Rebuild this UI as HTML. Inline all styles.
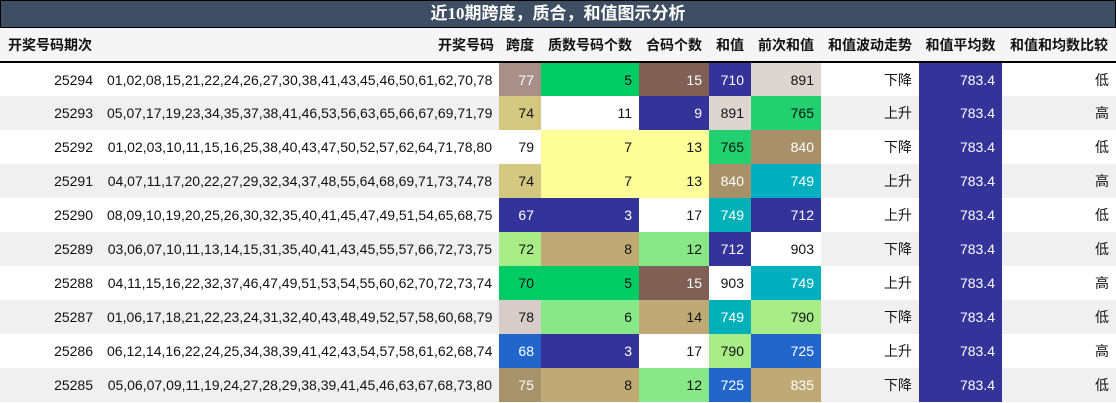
<!DOCTYPE html><html><head><meta charset="utf-8"><style>
*{margin:0;padding:0;box-sizing:border-box}
body{width:1116px;height:403px;background:#fff;font-family:"Liberation Sans","Noto Sans CJK SC",sans-serif;font-size:14px;color:#111;overflow:hidden}
.t{height:28px;background:#3f4f63;border:1px solid #000;color:#fff;font-weight:bold;font-size:17px;text-align:center;line-height:26px;font-family:"Liberation Serif","Noto Sans CJK SC",sans-serif}
table{border-collapse:collapse;table-layout:fixed;width:1116px}
td,th{height:34px;padding:0 7px;text-align:right;white-space:nowrap;overflow:hidden}
th{font-weight:bold;background:#f5f5f5;border-bottom:2px solid #000;height:34px;text-align:center;padding:0 3px}
tr:nth-child(odd) td{background:#f0f0f0}
tr td.w{color:#fff}
.a{background:#333399!important;color:#fff}
</style></head><body>
<div class="t">近10期跨度，质合，和值图示分析</div>
<table>
<colgroup><col style="width:100px"><col style="width:399px"><col style="width:42px"><col style="width:98px"><col style="width:70px"><col style="width:42px"><col style="width:70px"><col style="width:98px"><col style="width:83px"><col style="width:114px"></colgroup>
<tr><th style="text-align:left;padding-left:8px">开奖号码期次</th><th style="text-align:right;padding-right:5px">开奖号码</th><th>跨度</th><th>质数号码个数</th><th>合码个数</th><th>和值</th><th>前次和值</th><th>和值波动走势</th><th>和值平均数</th><th>和值和均数比较</th></tr>
<tr><td>25294</td><td>01,02,08,15,21,22,24,26,27,30,38,41,43,45,46,50,61,62,70,78</td><td class="w" style="background:#a89088!important">77</td><td style="background:#00cc66!important">5</td><td class="w" style="background:#806055!important">15</td><td class="w" style="background:#333399!important">710</td><td style="background:#ddd5d0!important">891</td><td>下降</td><td class="a">783.4</td><td>低</td></tr>
<tr><td>25293</td><td>05,07,17,19,23,34,35,37,38,41,46,53,56,63,65,66,67,69,71,79</td><td style="background:#d4c880">74</td><td style="background:#fff">11</td><td class="w" style="background:#333399">9</td><td style="background:#ddd5d0">891</td><td style="background:#22d070">765</td><td>上升</td><td class="a">783.4</td><td>高</td></tr>
<tr><td>25292</td><td>01,02,03,10,11,15,16,25,38,40,43,47,50,52,57,62,64,71,78,80</td><td style="background:#fff!important">79</td><td style="background:#ffff99!important">7</td><td style="background:#ffff99!important">13</td><td style="background:#22d070!important">765</td><td class="w" style="background:#a89068!important">840</td><td>下降</td><td class="a">783.4</td><td>低</td></tr>
<tr><td>25291</td><td>04,07,11,17,20,22,27,29,32,34,37,48,55,64,68,69,71,73,74,78</td><td style="background:#d4c880">74</td><td style="background:#ffff99">7</td><td style="background:#ffff99">13</td><td class="w" style="background:#a89068">840</td><td class="w" style="background:#00b0c0">749</td><td>上升</td><td class="a">783.4</td><td>高</td></tr>
<tr><td>25290</td><td>08,09,10,19,20,25,26,30,32,35,40,41,45,47,49,51,54,65,68,75</td><td class="w" style="background:#333399!important">67</td><td class="w" style="background:#333399!important">3</td><td style="background:#fff!important">17</td><td class="w" style="background:#00b0b8!important">749</td><td class="w" style="background:#333399!important">712</td><td>上升</td><td class="a">783.4</td><td>低</td></tr>
<tr><td>25289</td><td>03,06,07,10,11,13,14,15,31,35,40,41,43,45,55,57,66,72,73,75</td><td style="background:#a8ec88">72</td><td style="background:#bfaa75">8</td><td style="background:#88e888">12</td><td class="w" style="background:#333399">712</td><td style="background:#fff">903</td><td>下降</td><td class="a">783.4</td><td>低</td></tr>
<tr><td>25288</td><td>04,11,15,16,22,32,37,46,47,49,51,53,54,55,60,62,70,72,73,74</td><td style="background:#00cc66!important">70</td><td style="background:#00cc66!important">5</td><td class="w" style="background:#806055!important">15</td><td style="background:#fff!important">903</td><td class="w" style="background:#00b0c0!important">749</td><td>上升</td><td class="a">783.4</td><td>高</td></tr>
<tr><td>25287</td><td>01,06,17,18,21,22,23,24,31,32,40,43,48,49,52,57,58,60,68,79</td><td style="background:#d8ccc8">78</td><td style="background:#88e888">6</td><td style="background:#bfaa75">14</td><td class="w" style="background:#00b0b8">749</td><td style="background:#a8ec88">790</td><td>下降</td><td class="a">783.4</td><td>低</td></tr>
<tr><td>25286</td><td>06,12,14,16,22,24,25,34,38,39,41,42,43,54,57,58,61,62,68,74</td><td class="w" style="background:#2266cc!important">68</td><td class="w" style="background:#333399!important">3</td><td style="background:#fff!important">17</td><td style="background:#a8ec88!important">790</td><td class="w" style="background:#2266cc!important">725</td><td>上升</td><td class="a">783.4</td><td>高</td></tr>
<tr><td>25285</td><td>05,06,07,09,11,19,24,27,28,29,38,39,41,45,46,63,67,68,73,80</td><td class="w" style="background:#a8926c">75</td><td style="background:#bfaa75">8</td><td style="background:#88e888">12</td><td class="w" style="background:#2266cc">725</td><td class="w" style="background:#bfaa75">835</td><td>下降</td><td class="a">783.4</td><td>低</td></tr>
</table>
</body></html>
